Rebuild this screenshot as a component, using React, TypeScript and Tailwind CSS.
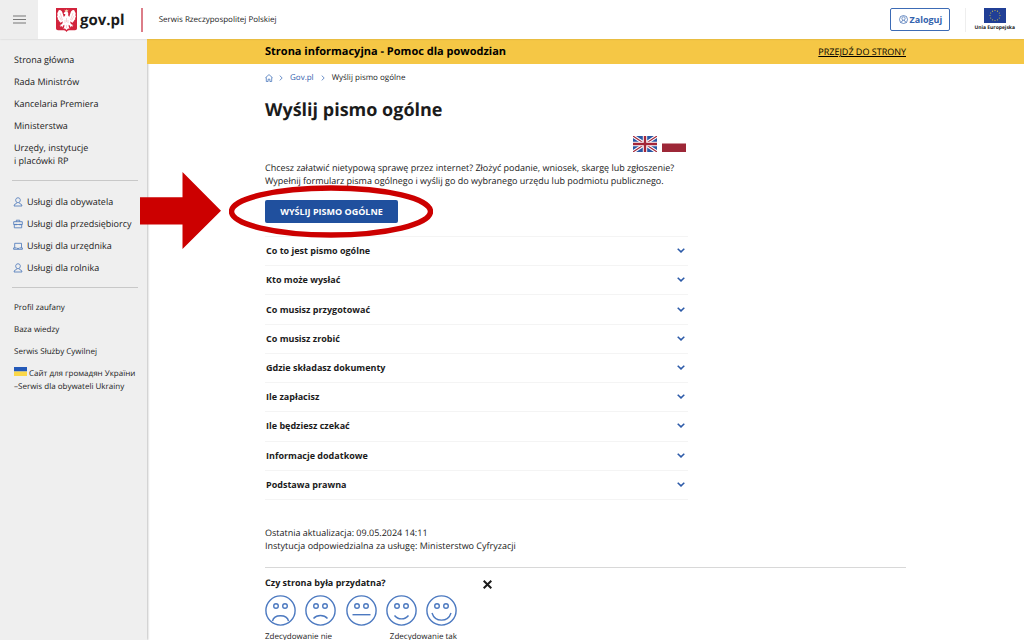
import React from "react";

const mainLinks = ["Strona główna", "Rada Ministrów", "Kancelaria Premiera", "Ministerstwa"];

const services: { label: string; icon: "person" | "case" | "laptop" }[] = [
  { label: "Usługi dla obywatela", icon: "person" },
  { label: "Usługi dla przedsiębiorcy", icon: "case" },
  { label: "Usługi dla urzędnika", icon: "laptop" },
  { label: "Usługi dla rolnika", icon: "person" },
];

const smallLinks = ["Profil zaufany", "Baza wiedzy", "Serwis Służby Cywilnej"];

const sections = [
  "Co to jest pismo ogólne",
  "Kto może wysłać",
  "Co musisz przygotować",
  "Co musisz zrobić",
  "Gdzie składasz dokumenty",
  "Ile zapłacisz",
  "Ile będziesz czekać",
  "Informacje dodatkowe",
  "Podstawa prawna",
];

const faces = [
  { label: "Zdecydowanie nie", mouth: "M7.500 26 C9 19 22 19 23.500 26" },
  { label: "Raczej nie", mouth: "M8.500 23.500 C12 19.500 19 19.500 22.500 23.500" },
  { label: "Trudno powiedzieć", mouth: "M6.500 19.700 H24.500" },
  { label: "Raczej tak", mouth: "M8.500 20.500 C12 25 19 25 22.500 20.500" },
  { label: "Zdecydowanie tak", mouth: "M6 18 C9 27.500 22 27.500 25 18" },
];

function Eagle() {
  return (
    <svg viewBox="0 0 21 24" className="h-[24px] w-[21px]" aria-hidden="true">
      <path d="M0 0H21V20.500Q21 22.300 19 22.300H13Q11.300 22.300 10.500 24Q9.700 22.300 8 22.300H2Q0 22.300 0 20.500Z" fill="#d2233c" />
      <g fill="#fff">
        <path d="M8.600 1.600L9.500 2.400L10.400 1.300L11.300 2.400L12.300 1.600L12 3.600H9Z" fill="#f3dfaf" />
        <path d="M8.900 3.800Q10.300 2.800 11.700 4Q12.700 5.200 12.100 7.200L13.200 9L15 3.500Q16.600 1.800 18.200 2.200L19.700 5.300L19.400 7.200L20 8.900L19.100 9.800L19.300 11.500L18.200 12L18.100 13.600L17 13.600L16.500 15L15.300 14.100L14 13.500L14.900 16L17.500 17.300L16.200 17.600L16.700 19L15.200 18L14.700 19.400L13.800 17.500L12.600 16.800L12.800 19L13.600 20.800L12 20.500L10.500 22L9 20.500L7.400 20.800L8.200 19L8.400 16.800L7.200 17.500L6.300 19.400L5.800 18L4.300 19L4.800 17.600L3.500 17.300L6.100 16L7 13.500L5.700 14.100L4.500 15L4 13.600L2.900 13.600L2.800 12L1.700 11.500L1.900 9.800L1 8.900L1.600 7.200L1.300 5.300L2.800 2.200Q4.400 1.800 6 3.500L7.800 9L9.100 7.600L9.300 6L7.900 6.100L7.700 5.200Z" />
      </g>
      <path d="M4 5L6.500 12M3 8L5.500 12.500M17 5L14.500 12M18 8L15.500 12.500M10.500 10V14M9 12V15M12 12V15M10.500 17V20" stroke="#d2233c" strokeOpacity=".35" strokeWidth=".6" fill="none" />
    </svg>
  );
}

function ServiceIcon({ kind }: { kind: "person" | "case" | "laptop" }) {
  return (
    <svg viewBox="0 0 10 10" className="size-[10px] shrink-0" fill="none" stroke="#4673b8" strokeWidth=".8" aria-hidden="true">
      {kind === "person" && (
        <path d="M5 .8C6.600 .8 7.300 1.900 7.300 3.200S6.300 5.700 5 5.700 2.700 4.500 2.700 3.200 3.400 .8 5 .8ZM3.700 5.500L3.400 6.500Q1 7 1 9H9Q9 7 6.600 6.500L6.300 5.500" />
      )}
      {kind === "case" && (
        <path d="M.7 2.700H9.300V5.500H.7ZM1.300 5.500V8.800H8.700V5.500M3.300 2.700V1.200H6.700V2.700M3 4.800V6.300M7 4.800V6.300" />
      )}
      {kind === "laptop" && <path d="M1.700 6.800V2.300H8.500V6.800M.6 6.900H3.500L4 7.400H6L6.500 6.900H9.400V8.300H.6Z" />}
    </svg>
  );
}

function EuFlag() {
  const stars = Array.from({ length: 12 }, (_, i) => (i * Math.PI) / 6);
  return (
    <svg viewBox="0 0 22 15" className="h-[15px] w-[22px]" aria-hidden="true">
      <rect width="22" height="15" fill="#213f96" />
      {stars.map((a) => (
        <circle key={a} cx={11 + 5 * Math.cos(a)} cy={7.5 + 5 * Math.sin(a)} r=".6" fill="#c6bd4b" />
      ))}
    </svg>
  );
}

function UkFlag() {
  return (
    <svg viewBox="0 0 24 16" className="h-[16px] w-[24px]" aria-hidden="true">
      <rect width="24" height="16" fill="#2a57a5" />
      <path d="M0 0L24 16M24 0L0 16" stroke="#fff" strokeWidth="3.400" />
      <path d="M0 0L24 16M24 0L0 16" stroke="#a32638" strokeWidth="1.100" />
      <path d="M12 0V16M0 8H24" stroke="#fff" strokeWidth="4.400" />
      <path d="M12 0V16M0 8H24" stroke="#a32638" strokeWidth="2.400" />
    </svg>
  );
}

function Crumb() {
  return (
    <svg viewBox="0 0 4 6" className="h-[6px] w-[4px]" fill="none" stroke="#5f86c4" strokeWidth=".9" aria-hidden="true">
      <path d="M.7 .6L3.200 3L.7 5.400" />
    </svg>
  );
}

export default function App() {
  return (
    <div className="flex h-screen flex-col overflow-hidden bg-white font-['Open_Sans','Noto_Sans',sans-serif] text-[9px] leading-[13px] text-[#222] [text-rendering:geometricPrecision]">
      <header className="relative z-10 flex h-[39px] shrink-0 items-center bg-white shadow-[0_0_2px_rgba(0,0,0,0.15)]">
        <button aria-label="Menu" className="flex h-full w-[38px] items-center justify-center bg-[#eee]">
          <svg viewBox="0 0 13 9" className="h-[9px] w-[13px]" stroke="#777" strokeWidth="1" aria-hidden="true">
            <path d="M0 1H13M0 4.500H13M0 8H13" />
          </svg>
        </button>
        <a href="#gov" className="ml-[18px] flex items-center gap-[3px] text-[15px] leading-[20px] font-bold text-[#1b1b1b]">
          <Eagle />
          gov.pl
        </a>
        <div className="ml-[16px] h-[24px] w-[2px] bg-[#dc7d88]" />
        <p className="ml-[16px] text-[8px]">Serwis Rzeczypospolitej Polskiej</p>
        <button className="ml-auto flex h-[23px] w-[60px] items-center justify-center gap-[2px] rounded-[2px] border border-[#3c6bb5] text-[9px] font-bold text-[#3463ae]">
          <svg viewBox="0 0 9 9" className="size-[9px]" fill="none" stroke="#3463ae" strokeWidth=".7" aria-hidden="true">
            <circle cx="4.500" cy="4.500" r="4" />
            <path d="M4.500 1.800C5.700 1.800 6.100 2.600 6.100 3.500S5.500 5.200 4.500 5.200 2.900 4.400 2.900 3.500 3.300 1.800 4.500 1.800M1.700 7.300L3.700 5.900V5M7.300 7.300L5.300 5.900V5" />
          </svg>
          Zaloguj
        </button>
        <div className="ml-[15px] h-[24px] w-px bg-[#eee]" />
        <a href="#ue" className="mr-[9px] ml-[8px] flex flex-col items-center gap-[2px] text-[5px] leading-[7px] font-bold">
          <EuFlag />
          Unia Europejska
        </a>
      </header>

      <div className="flex min-h-0 flex-1">
        <aside className="w-[147px] shrink-0 bg-[#efefef] shadow-[1px_0_2px_rgba(0,0,0,0.25)]">
          <nav className="px-[12px] pt-[14px]">
            <ul className="flex flex-col gap-[9px] px-[2px] pb-[13px]">
              {mainLinks.map((l) => (
                <li key={l}>
                  <a href="#menu">{l}</a>
                </li>
              ))}
              <li>
                <a href="#menu">
                  Urzędy, instytucje
                  <br />i placówki RP
                </a>
              </li>
            </ul>
            <ul className="-mr-[3px] flex flex-col gap-[9px] border-t border-[#c8c8c8] px-[1px] pt-[14px] pb-[13px]">
              {services.map((s) => (
                <li key={s.label}>
                  <a href="#uslugi" className="flex items-center gap-[4px] whitespace-nowrap">
                    <ServiceIcon kind={s.icon} />
                    {s.label}
                  </a>
                </li>
              ))}
            </ul>
            <ul className="-mr-[3px] flex flex-col gap-[9px] border-t border-[#c8c8c8] px-[2px] pt-[13px] text-[8px]">
              {smallLinks.map((l) => (
                <li key={l}>
                  <a href="#menu" className="block">
                    {l}
                  </a>
                </li>
              ))}
              <li>
                <a href="#ua" className="block whitespace-nowrap">
                  <svg viewBox="0 0 13 9" className="mr-[2px] inline-block h-[9px] w-[13px] align-baseline" aria-hidden="true">
                    <rect width="13" height="4.500" fill="#2459b8" />
                    <rect y="4.500" width="13" height="4.500" fill="#fad748" />
                  </svg>
                  Сайт для громадян України
                  <br />
                  –Serwis dla obywateli Ukrainy
                </a>
              </li>
            </ul>
          </nav>
        </aside>

        <main className="min-w-0 flex-1">
          <div className="bg-[#f5c745] px-[118px]">
            <div className="mx-auto flex h-[25px] max-w-[641px] items-center justify-between text-black">
              <strong className="text-[11px] leading-[16px] font-bold">Strona informacyjna - Pomoc dla powodzian</strong>
              <a href="#pomoc" className="text-[9px] underline">
                PRZEJDŹ DO STRONY
              </a>
            </div>
          </div>

          <div className="px-[118px]">
            <div className="mx-auto max-w-[641px]">
              <nav aria-label="Okruszki" className="flex items-center gap-[7px] pt-[7px] text-[8px]">
                <a href="#home" aria-label="Strona główna" className="-mr-px">
                  <svg viewBox="0 0 8 8" className="size-[8px]" fill="none" stroke="#4b78bd" strokeWidth=".8" aria-hidden="true">
                    <path d="M.4 3.800L4 .6L7.600 3.800M1.300 3.300V7.500H3.100V5.200H4.900V7.500H6.700V3.300" />
                  </svg>
                </a>
                <Crumb />
                <a href="#gov" className="text-[#3463ae]">
                  Gov.pl
                </a>
                <Crumb />
                <span>Wyślij pismo ogólne</span>
              </nav>

              <div className="max-w-[423px]">
                <h1 className="pt-[14px] text-[18px] leading-[24px] font-bold text-[#1b1b1b]">Wyślij pismo ogólne</h1>
                <div className="flex items-end justify-end gap-[5px] pt-[14px] pr-[2px]">
                  <a href="#en" aria-label="English">
                    <UkFlag />
                  </a>
                  <a href="#pl" aria-label="Polski">
                    <svg viewBox="0 0 24 16" className="h-[16px] w-[24px]" aria-hidden="true">
                      <rect width="24" height="8" fill="#fff" />
                      <rect y="7.500" width="24" height="8.500" fill="#9d2737" />
                    </svg>
                  </a>
                </div>
                <p className="pt-[9px]">
                  Chcesz załatwić nietypową sprawę przez internet? Złożyć podanie, wniosek, skargę lub zgłoszenie?
                  <br />
                  Wypełnij formularz pisma ogólnego i wyślij go do wybranego urzędu lub podmiotu publicznego.
                </p>

                <div className="relative mt-[13px] w-[133px]">
                  <button className="h-[23px] w-full rounded-[2px] bg-[#20509e] text-[9px] font-bold text-white">WYŚLIJ PISMO OGÓLNE</button>
                  <svg viewBox="0 0 204 53" className="pointer-events-none absolute top-[-15px] left-[-36px] h-[53px] w-[204px] max-w-none" aria-hidden="true">
                    <ellipse cx="102" cy="26.500" rx="99.500" ry="23.500" fill="none" stroke="#cc0000" strokeWidth="5.500" />
                  </svg>
                  <svg viewBox="0 0 81 77" className="pointer-events-none absolute top-[-28px] left-[-125px] z-10 h-[77px] w-[81px] max-w-none" aria-hidden="true">
                    <path d="M0 25.300H42.500V0L81 38.800L42.500 77V52.500H0Z" fill="#cc0000" />
                  </svg>
                </div>

                <ul className="mt-[13px] flex h-[264px] flex-col divide-y divide-[#f4f4f4] border-y border-[#f4f4f4]">
                  {sections.map((s) => (
                    <li key={s} className="flex flex-1">
                      <button className="flex w-full items-center justify-between pr-[3px] pb-px pl-px text-left font-bold text-[#1b1b1b]">
                        {s}
                        <svg viewBox="0 0 8 5" className="h-[5px] w-[8px]" fill="none" stroke="#2c5aa8" strokeWidth="1.500" aria-hidden="true">
                          <path d="M.7 .8L4 3.900L7.300 .8" />
                        </svg>
                      </button>
                    </li>
                  ))}
                </ul>
              </div>

              <p className="pt-[26px]">
                Ostatnia aktualizacja: 09.05.2024 14:11
                <br />
                Instytucja odpowiedzialna za usługę: Ministerstwo Cyfryzacji
              </p>

              <section className="mt-[15px] border-t border-[#d8d8d8] pt-[8px]">
                <div className="flex w-[227px] items-center justify-between">
                  <h2 className="font-bold text-[#1b1b1b]">Czy strona była przydatna?</h2>
                  <button aria-label="Zamknij" className="pt-[4px]">
                    <svg viewBox="0 0 9 9" className="size-[9px]" stroke="#1b1b1b" strokeWidth="2" aria-hidden="true">
                      <path d="M.7 .7L8.300 8.300M8.300 .7L.7 8.300" />
                    </svg>
                  </button>
                </div>
                <div className="flex w-[192px] justify-between pt-[6px]">
                  {faces.map((f) => (
                    <button key={f.label} aria-label={f.label}>
                      <svg viewBox="0 0 31 31" className="size-[31px]" fill="none" stroke="#4c79c0" strokeWidth="1.400" aria-hidden="true">
                        <circle cx="15.500" cy="15.500" r="14.600" />
                        <circle cx="11" cy="11" r="2.300" />
                        <circle cx="20" cy="11" r="2.300" />
                        <path d={f.mouth} />
                      </svg>
                    </button>
                  ))}
                </div>
                <div className="flex w-[192px] justify-between pt-[4px] text-[8px]">
                  <span>Zdecydowanie nie</span>
                  <span>Zdecydowanie tak</span>
                </div>
              </section>
            </div>
          </div>
        </main>
      </div>
    </div>
  );
}
